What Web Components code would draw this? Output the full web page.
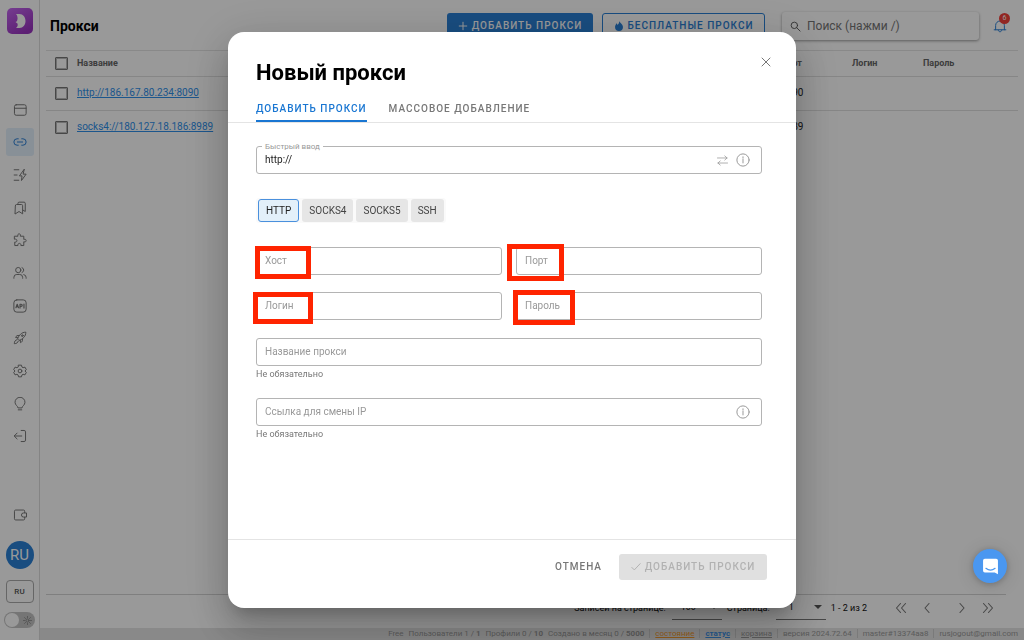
<!DOCTYPE html>
<html lang="ru">
<head>
<meta charset="utf-8">
<meta name="viewport" content="width=device-width, initial-scale=1">
<title>Прокси</title>
<style>
  html, body { margin: 0; height: 100%; }
  body { font: 10px/14px Roboto, "Liberation Sans", sans-serif; color: #222; background: #fff; overflow: hidden; --blue: #2a80d6; }
</style>
</head>
<body>
<proxy-app></proxy-app>

<script>
const ICONS = {
  window: '<rect x="2.5" y="3" width="20" height="18" rx="3"/><path d="M2.5 9h20"/>',
  link: '<path d="M9 6.500H7a5.500 5.500 0 0 0 0 11h2M15 6.500h2a5.500 5.500 0 0 1 0 11h-2M7.500 12h9"/>',
  bolt: '<path d="M2 3h8M2 12h5M2 21h8M19 2.500 11 13.500h4.500L14.500 21.500 22.500 10.500H18z"/>',
  marks: '<path d="M8.500 6V4a2 2 0 0 1 2-2H19a2 2 0 0 1 2 2v14l-4-2.500"/><path d="M4 8a2 2 0 0 1 2-2h8.500a2 2 0 0 1 2 2v14l-6.200-4L4 22z"/>',
  puzzle: '<path d="M3 5.500h5.500C7.500 2.500 9 1.500 10.500 1.500s3 1 2 4H18.500V11c3-1 4 .5 4 2s-1 3-4 2v6.500h-5c.6-2.400-.8-3.700-2.500-3.700s-3.100 1.300-2.500 3.700H3v-6c2.500.6 3.700-.8 3.700-2.500S5.500 10 3 10.500z"/>',
  users: '<circle cx="9" cy="7" r="4.500"/><path d="M1.500 21v-1.500a5 5 0 0 1 5-5h5a5 5 0 0 1 5 5V21M15.500 2.800a4.500 4.500 0 0 1 0 8.400M18.500 14.700a5 5 0 0 1 4 5V21"/>',
  api: '<rect x="1.500" y="1.500" width="21" height="21" rx="5"/><path stroke-width="2" d="M5 15l2.200-6 2.200 6M5.800 13h3M12 15.500V9h2a1.800 1.800 0 0 1 0 3.700h-2M18.800 8.500v7"/>',
  rocket: '<path d="M8 13C10 7 15 2 22 2c0 7-5 12-11 14zM8.500 11.500l-4-.3c.7-2.700 3-4.200 6-3.500M12.500 15.500l.3 4.500c2.500-.8 4-3 3.500-6M6.500 15c-3 .5-4 3-4.300 6.800 3.800-.3 6.300-1.500 6.800-4.300"/><circle cx="16" cy="8" r="1.500"/>',
  gear: '<path d="M9.500 2h5l.8 3.200 2 1.100 3.200-.9 2.300 4.200-2.300 2.400 2.300 2.400-2.300 4.200-3.200-.9-2 1.100-.8 3.200h-5l-.8-3.200-2-1.100-3.200.9-2.300-4.200L3.500 12 1.200 9.600l2.300-4.200 3.200.9 2-1.100z"/><circle cx="12" cy="12" r="3.200"/>',
  bulb: '<path d="M8.500 18c0-2.500-5-4-5-9a8.500 8.500 0 0 1 17 0c0 5-5 6.500-5 9zM9 22h6"/>',
  exit: '<path d="M14 2.500h5a2.500 2.500 0 0 1 2.500 2.500v14a2.500 2.500 0 0 1-2.500 2.500h-5M15 12H2.500M7 7l-5 5 5 5"/>',
  wallet: '<path d="M20 8V5.500a2 2 0 0 0-2-2H4.500a2 2 0 0 0-2 2v13a2 2 0 0 0 2 2H18a2 2 0 0 0 2-2V16"/><path d="M22.500 8.500H18a3.500 3.500 0 0 0 0 7h4.500z"/>',
  plus: '<path d="M12 3v18M3 12h18"/>',
  flame: '<path fill="currentColor" stroke="none" d="M12.500 0c.5 4 9 7 9 14.500a9.500 9.500 0 0 1-19 0C2.500 10.500 5 8 6 5.500 7.500 6.500 8 8 8.200 9.500 11 7.500 12.500 5 12.500 0z"/>',
  search: '<circle cx="9.500" cy="9.500" r="7"/><path d="M14.500 14.500 22 22"/>',
  bell: '<path d="M4.500 18.500V11a7.500 7.500 0 0 1 15 0v7.500M2 18.500h20M9 19c0 4 6 4 6 0"/>',
  close: '<path d="M4 4l16 16M20 4 4 20"/>',
  swap: '<path d="M1 6.500h21M17 2l5 4.500-5 4.500M23 17.500H2M7 13l-5 4.500L7 22"/>',
  info: '<circle cx="12" cy="12" r="10.500"/><path d="M12 10.500V17M12 6.500v2"/>',
  check: '<path d="M2 13l6 6L22 4"/>',
  first: '<path d="M11 3l-8 9 8 9M21 3l-8 9 8 9"/>',
  prev: '<path d="M16 3l-8 9 8 9"/>',
  next: '<path d="M8 3l8 9-8 9"/>',
  last: '<path d="M3 3l8 9-8 9M13 3l8 9-8 9"/>',
  sun: '<circle cx="12" cy="12" r="4"/><path d="M12 1v4M12 19v4M1 12h4M19 12h4M4 4l3 3M17 17l3 3M20 4l-3 3M7 17l-3 3"/>',
  chat: '<path fill="currentColor" stroke="none" d="M4 1h16a2.500 2.500 0 0 1 2.500 2.500V23L18 20.500H4A2.500 2.500 0 0 1 1.500 18V3.500A2.500 2.500 0 0 1 4 1z"/><path stroke="#4a97f0" stroke-width="1.600" d="M5.500 14.500c4 3.300 9 3.300 13 0"/>',
};

const RESET = `
  * { box-sizing: border-box; }
  button { font: inherit; color: inherit; background: none; border: 0; margin: 0; padding: 0; cursor: pointer; }
  a { color: inherit; }
`;

function define(name, css, html) {
  customElements.define(name, class extends HTMLElement {
    constructor() {
      super();
      this.attachShadow({ mode: 'open' }).innerHTML =
        `<style>${RESET}${css}</style>` + (typeof html === 'function' ? html(this) : html);
    }
  });
}

define('ui-icon', `
  :host { display: inline-block; flex: none; width: 14px; height: 14px; }
  svg { display: block; width: 100%; height: 100%; fill: none; stroke: currentColor; stroke-width: var(--stroke, 1.7); stroke-linecap: round; stroke-linejoin: round; }
`, el => `<svg viewBox="0 0 24 24" aria-hidden="true">${ICONS[el.getAttribute('name')]}</svg>`);

define('ui-button', `
  :host { display: block; }
  button { display: flex; align-items: center; justify-content: center; gap: 4px; width: 100%; height: 26px; padding: 0 12px; border-radius: 3px; font-size: 10px; font-weight: 500; letter-spacing: 1px; white-space: nowrap; color: #777; }
  ui-icon { width: 10px; height: 10px; --stroke: 2.4; }
  :host([kind=primary]) button { background: var(--blue); color: #fff; }
  :host([kind=outline]) button { border: 1px solid var(--blue); color: var(--blue); }
  :host([kind=disabled]) button { background: #e0e0e0; color: #b2b2b2; cursor: default; }
`, el => `<button type="button" ${el.getAttribute('kind') === 'disabled' ? 'disabled' : ''}>
  ${el.hasAttribute('icon') ? `<ui-icon name="${el.getAttribute('icon')}"></ui-icon>` : ''}<span><slot></slot></span></button>`);

define('side-bar', `
  :host { display: flex; flex-direction: column; align-items: center; width: 40px; padding: 8px 0 12px; border-right: 1px solid #dcdcdc; color: #777; }
  .logo { width: 26px; height: 26px; margin-bottom: 4px; }
  nav { display: flex; flex-direction: column; justify-content: space-between; flex: 0 1 355px; margin: auto 0; }
  nav a { display: grid; place-items: center; width: 28px; height: 28px; border-radius: 3px; color: inherit; }
  nav a.on { background: #e3f0fc; color: var(--blue); }
  .wallet { margin-bottom: 19px; height: 14px; }
  .avatar { width: 28px; height: 28px; border-radius: 50%; background: var(--blue); color: #fff; font-size: 15px; line-height: 28px; }
  .lang { width: 28px; height: 23px; margin: 11px 0 9px; border: 1px solid #aaa; border-radius: 4px; font-size: 8px; font-weight: 500; color: #555; }
  .theme { display: flex; align-items: center; width: 31px; height: 16px; border-radius: 8px; background: #c4c4c4; }
  .theme input { appearance: none; width: 14px; height: 14px; margin: 0 4px 0 1px; border-radius: 50%; background: #fff; }
  .theme ui-icon { width: 9px; height: 9px; }
`, `
  <svg class="logo" viewBox="0 0 26 26" role="img" aria-label="Dolphin">
    <defs><linearGradient id="g" x1="0" y1="0" x2=".6" y2="1"><stop offset="0" stop-color="#c466f0"/><stop offset="1" stop-color="#9a34c0"/></linearGradient></defs>
    <rect width="26" height="26" rx="5" fill="url(#g)"/>
    <path fill="#fff" d="M9 6h3.500c3.500 0 6 3 6 7s-2.500 7-6 7H9c1.500-1.200 2-2.500 1.500-4.500-.7-.4-1.500-.8-2-1.500.9-.3 1.500-.8 1.700-1.500C11 10 10.500 7.500 9 6z"/>
  </svg>
  <nav>${['window', 'link', 'bolt', 'marks', 'puzzle', 'users', 'api', 'rocket', 'gear', 'bulb', 'exit']
    .map(n => `<a href="#${n}" aria-label="${n}" class="${n === 'link' ? 'on' : ''}"><ui-icon name="${n}"></ui-icon></a>`).join('')}</nav>
  <button class="wallet" aria-label="wallet"><ui-icon name="wallet"></ui-icon></button>
  <button class="avatar">RU</button>
  <button class="lang">RU</button>
  <label class="theme"><input type="checkbox" aria-label="theme"><ui-icon name="sun"></ui-icon></label>
`);

define('top-bar', `
  :host { display: flex; align-items: center; box-sizing: border-box; height: 50px; padding: 2px 10px 0; }
  h1 { flex: 1; margin: 0; font-size: 14px; line-height: 20px; font-weight: 700; color: #000; }
  .add { width: 146px; margin-right: 9px; }
  .free { width: 163px; margin-right: 17px; }
  .search { display: flex; align-items: center; width: 197px; height: 28px; padding: 0 8px; gap: 6px; border-radius: 3px; color: #555; box-shadow: 0 1px 3px rgba(0,0,0,.4); margin-right: 14px; }
  .search ui-icon { width: 11px; height: 11px; --stroke: 2; }
  input { flex: 1; min-width: 0; border: 0; outline: 0; padding: 0; background: none; font: 12px/16px Roboto, sans-serif; color: #444; }
  input::placeholder { color: #757575; opacity: 1; }
  .bell { position: relative; height: 16px; margin-right: 7px; color: var(--blue); }
  .bell ui-icon { width: 14px; height: 16px; }
  .badge { position: absolute; left: 6px; top: -5px; width: 11px; height: 11px; border-radius: 50%; background: #f4403a; color: #fff; font-size: 7px; line-height: 11px; text-align: center; }
`, `
  <h1>Прокси</h1>
  <ui-button class="add" kind="primary" icon="plus">ДОБАВИТЬ ПРОКСИ</ui-button>
  <ui-button class="free" kind="outline" icon="flame">БЕСПЛАТНЫЕ ПРОКСИ</ui-button>
  <label class="search"><ui-icon name="search"></ui-icon><input type="text" aria-label="Поиск" placeholder="Поиск (нажми /)"></label>
  <button class="bell" aria-label="notifications"><ui-icon name="bell"></ui-icon><span class="badge">6</span></button>
`);

define('proxy-table', `
  :host { display: block; margin: 0 6px; border-top: 1px solid #e4e4e4; }
  table { width: 100%; table-layout: fixed; border-collapse: collapse; text-align: left; }
  th, td { padding: 0; }
  th { height: 25px; font-size: 9px; font-weight: 700; color: #666; }
  td { height: 34px; font-size: 10px; color: #222; }
  tr { border-bottom: 1px solid #e0e0e0; }
  tr:last-child { border-bottom: 0; }
  thead tr:last-child { border-bottom: 1px solid #e0e0e0; }
  th:first-child, td:first-child { padding-left: 9px; }
  input { appearance: none; display: block; width: 13px; height: 13px; margin: 0; border: 1px solid #777; outline: 1px solid #bbb; outline-offset: -2px; border-radius: 1px; }
  a { color: #2f8fea; }
  .c { width: 31px; } .p { width: 71px; } .l { width: 71px; } .w { width: 95px; }
`, `
  <table>
    <colgroup><col class="c"><col><col class="p"><col class="l"><col class="w"></colgroup>
    <thead><tr><th><input type="checkbox" aria-label="Выбрать все"></th><th>Название</th><th>Порт</th><th>Логин</th><th>Пароль</th></tr></thead>
    <tbody>
      <tr><td><input type="checkbox" aria-label="8090"></td><td><a href="#1">http://186.167.80.234:8090</a></td><td>8090</td><td></td><td></td></tr>
      <tr><td><input type="checkbox" aria-label="8989"></td><td><a href="#2">socks4://180.127.18.186:8989</a></td><td>8989</td><td></td><td></td></tr>
    </tbody>
  </table>
`);

define('table-pager', `
  :host { display: flex; justify-content: flex-end; align-items: center; height: 34px; box-sizing: border-box; margin: 0 18px 0 6px; padding: 0 12px 8px 0; border-top: 1px solid #d4d4d4; font-size: 9px; color: #111; }
  label { display: flex; align-items: center; gap: 6px; margin-right: 5px; }
  .pick { display: flex; align-items: center; width: 50px; height: 24px; padding-right: 4px; border-bottom: 1px solid #777; }
  select { flex: 1; min-width: 0; appearance: none; border: 0; background: none; font: inherit; color: inherit; padding: 0 0 0 9px; margin: 0; }
  .page select { padding-left: 13px; }
  .pick::after { content: ""; border: 4px solid transparent; border-top-color: #555; border-bottom: 0; }
  .range { margin-right: 28px; }
  .nav { display: flex; gap: 14px; color: #777; }
  .nav button { display: flex; }
  .nav :nth-child(3) { margin-left: 9px; }
  ui-icon { width: 12px; height: 12px; --stroke: 2.2; }
`, `
  <label>Записей на странице:<span class="pick"><select><option>100</option></select></span></label>
  <label>Страница:<span class="pick page"><select><option>1</option></select></span></label>
  <span class="range">1 - 2 из 2</span>
  <span class="nav">${['first', 'prev', 'next', 'last'].map(n => `<button aria-label="${n}"><ui-icon name="${n}"></ui-icon></button>`).join('')}</span>
`);

define('status-bar', `
  :host { display: flex; justify-content: flex-end; align-items: center; height: 12px; box-sizing: border-box; padding: 0 6px 1px; background: #e4e4e4; color: #999; font-size: 8px; line-height: 11px; white-space: nowrap; }
  span { margin-left: 5px; }
  b { font-weight: 700; }
  .cell { margin-left: 5px; padding-left: 5px; border-left: 1px solid #ccc; line-height: 9px; }
  .o { color: #f59a2c; } .b { color: #3d93ea; font-weight: 700; }
`, `
  <span>Free</span><span>Пользователи 1 / <b>1</b></span><span>Профили 0 / <b>10</b></span><span>Создано в месяц 0 / <b>5000</b></span>
  <div class="cell"><a class="o" href="#state">состояние</a></div>
  <div class="cell"><a class="b" href="#status">статус</a></div>
  <div class="cell"><a href="#trash">корзина</a></div>
  <div class="cell">версия 2024.72.64</div>
  <div class="cell">master#13374aa8</div>
  <div class="cell">rusjogout@gmail.com</div>
`);

define('text-field', `
  :host { display: block; position: relative; min-width: 0; }
  .box { display: grid; grid-template-columns: 1fr auto; align-items: center; height: 28px; border: 1px solid #b4b4b4; border-radius: 3px; padding: 0 8px; }
  input { grid-area: 1 / 1; width: 100%; border: 0; outline: 0; padding: 0; background: none; font: inherit; font-size: 10px; color: #222; }
  label { grid-area: 1 / 1; font-size: 10px; color: #999; }
  :host([value]) label { position: absolute; left: 6px; top: -5px; padding: 0 3px; background: #fff; font-size: 8px; line-height: 12px; }
  .tools { grid-area: 1 / 2; display: flex; align-items: center; gap: 8px; padding-right: 3px; color: #999; }
  .hint { margin-top: 1px; font-size: 9px; line-height: 14px; color: #777; }
`, el => `
  <div class="box"><label for="f">${el.getAttribute('label')}</label><input id="f" type="text" value="${el.getAttribute('value') || ''}"><span class="tools"><slot name="tools"></slot></span></div>
  ${el.hasAttribute('hint') ? `<div class="hint">${el.getAttribute('hint')}</div>` : ''}
  <slot></slot>
`);

define('mark-frame', `
  :host { position: absolute; left: var(--l); top: var(--t); width: var(--w); height: var(--h); box-sizing: border-box; border: 5px solid #ff2400; pointer-events: none; z-index: 1; }
`, '');

define('protocol-picker', `
  :host { display: flex; gap: 3px; width: max-content; padding: 1px 2px; background: #fafafa; border-radius: 3px; }
  button { height: 23px; padding: 0 7px; border-radius: 3px; background: #e6e6e6; color: #444; font-size: 10px; }
  button[aria-pressed=true] { border: 1px solid #4a90dd; background: #e3f0fa; color: #222; }
`, `<button aria-pressed="true">HTTP</button><button>SOCKS4</button><button>SOCKS5</button><button>SSH</button>`);

define('proxy-dialog', `
  :host { display: flex; flex-direction: column; width: 568px; max-width: 100%; height: 100%; box-sizing: border-box; background: #fff; border-radius: 16px; box-shadow: 0 11px 15px -7px rgba(0,0,0,.2), 0 24px 38px 3px rgba(0,0,0,.14), 0 9px 46px 8px rgba(0,0,0,.12); }
  header { display: flex; justify-content: space-between; align-items: flex-start; padding: 24px 24px 0 28px; }
  h2 { margin: 4px 0 0; font-size: 22px; line-height: 26px; font-weight: 700; color: #000; }
  .x { display: flex; color: #777; }
  .x ui-icon { width: 12px; height: 12px; --stroke: 2; }
  .tabs { display: flex; gap: 22px; padding: 11px 28px 0; border-bottom: 1px solid #e4e4e4; }
  .tabs button { height: 25px; font-size: 10px; font-weight: 500; letter-spacing: 1px; color: #777; border-bottom: 2px solid transparent; }
  .tabs .on { color: #1976d2; border-color: #1976d2; }
  form { flex: 1; display: grid; align-content: start; padding: 23px 34px 0 28px; }
  protocol-picker { margin: 24px 0; }
  .pair { display: grid; grid-template-columns: 1fr 1fr; gap: 17px 14px; margin-bottom: 18px; }
  .last { margin-top: 17px; }
  footer { display: flex; justify-content: flex-end; gap: 5px; padding: 14px 29px 28px; border-top: 1px solid #e4e4e4; }
  .ok { width: 148px; }
`, `
  <header><h2>Новый прокси</h2><button class="x" aria-label="Закрыть"><ui-icon name="close"></ui-icon></button></header>
  <div class="tabs" role="tablist"><button class="on" role="tab" aria-selected="true">ДОБАВИТЬ ПРОКСИ</button><button role="tab">МАССОВОЕ ДОБАВЛЕНИЕ</button></div>
  <form>
    <text-field label="Быстрый ввод" value="http://"><ui-icon slot="tools" name="swap" style="width:11px;height:11px"></ui-icon><ui-icon slot="tools" name="info"></ui-icon></text-field>
    <protocol-picker></protocol-picker>
    <div class="pair">
      <text-field label="Хост"><mark-frame style="--l:-1px;--t:-1px;--w:56px;--h:33px"></mark-frame></text-field>
      <text-field label="Порт"><mark-frame style="--l:-9px;--t:-3px;--w:57px;--h:37px"></mark-frame></text-field>
      <text-field label="Логин"><mark-frame style="--l:-3px;--t:0px;--w:60px;--h:32px"></mark-frame></text-field>
      <text-field label="Пароль"><mark-frame style="--l:-3px;--t:-2px;--w:62px;--h:35px"></mark-frame></text-field>
    </div>
    <text-field label="Название прокси" hint="Не обязательно"></text-field>
    <text-field class="last" label="Ссылка для смены IP" hint="Не обязательно"><ui-icon slot="tools" name="info"></ui-icon></text-field>
  </form>
  <footer><ui-button>ОТМЕНА</ui-button><ui-button class="ok" kind="disabled" icon="check">ДОБАВИТЬ ПРОКСИ</ui-button></footer>
`);

define('proxy-app', `
  :host { display: grid; grid-template-columns: auto 1fr; height: 100vh; }
  side-bar { box-sizing: border-box; }
  main { display: flex; flex-direction: column; min-width: 0; }
  table-pager { margin-top: auto; }
  .scrim { position: fixed; inset: 0; display: flex; justify-content: center; padding: 32px; background: rgba(0,0,0,.4); }
  .chat { position: fixed; right: 17px; bottom: 57px; display: grid; place-items: center; width: 34px; height: 34px; border-radius: 50%; background: #4a97f0; color: #fff; box-shadow: 0 1px 6px rgba(0,0,0,.2), 0 2px 18px rgba(0,0,0,.15); }
  .chat ui-icon { width: 17px; height: 17px; }
`, `
  <side-bar></side-bar>
  <main><top-bar></top-bar><proxy-table></proxy-table><table-pager></table-pager><status-bar></status-bar></main>
  <div class="scrim"><proxy-dialog role="dialog" aria-label="Новый прокси"></proxy-dialog></div>
  <button class="chat" aria-label="chat"><ui-icon name="chat"></ui-icon></button>
`);
</script>
</body>
</html>
